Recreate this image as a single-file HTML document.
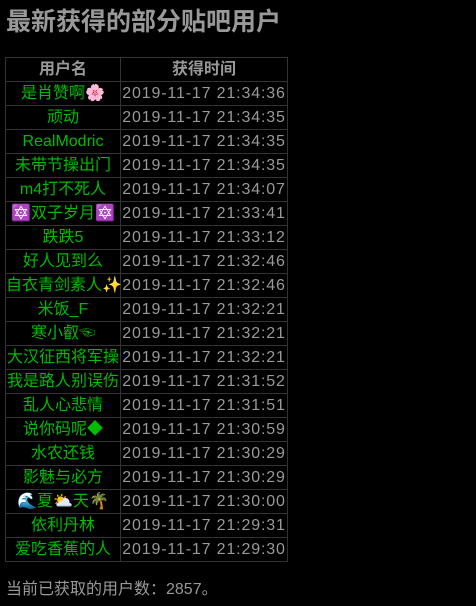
<!DOCTYPE html>
<html><head><meta charset="utf-8"><style>
body{margin:0;background:#000;color:#999;font-family:"Liberation Sans","Noto Sans CJK SC",sans-serif;width:476px;height:606px;overflow:hidden}
h1{position:absolute;left:6px;top:5px;margin:0;font-size:25px;line-height:34px;font-weight:bold;color:#999}
table{position:absolute;left:5px;top:57px;border-collapse:collapse;font-size:16px;table-layout:fixed;width:282px}
td,th{border:1px solid #333;height:23px;padding:0;text-align:center;white-space:nowrap;line-height:23px;overflow:visible}
th{font-weight:bold;color:#999}
col.a{width:115px}col.b{width:167px}
td:first-child{color:#0b0}
td:last-child{color:#999;letter-spacing:0.85px}
p{position:absolute;left:6px;top:579px;margin:0;font-size:16px;line-height:22px}
</style></head><body>
<h1>最新获得的部分贴吧用户</h1>
<table><col class="a"><col class="b">
<tr><th>用户名</th><th>获得时间</th></tr>
<tr><td>是肖赞啊🌸</td><td>2019-11-17 21:34:36</td></tr>
<tr><td>顽动</td><td>2019-11-17 21:34:35</td></tr>
<tr><td>RealModric</td><td>2019-11-17 21:34:35</td></tr>
<tr><td>未带节操出门</td><td>2019-11-17 21:34:35</td></tr>
<tr><td>m4打不死人</td><td>2019-11-17 21:34:07</td></tr>
<tr><td>🔯双子岁月🔯</td><td>2019-11-17 21:33:41</td></tr>
<tr><td>跌跌5</td><td>2019-11-17 21:33:12</td></tr>
<tr><td>好人见到么</td><td>2019-11-17 21:32:46</td></tr>
<tr><td>自衣青剑素人✨</td><td>2019-11-17 21:32:46</td></tr>
<tr><td>米饭_F</td><td>2019-11-17 21:32:21</td></tr>
<tr><td>寒小叡☜</td><td>2019-11-17 21:32:21</td></tr>
<tr><td>大汉征西将军操</td><td>2019-11-17 21:32:21</td></tr>
<tr><td>我是路人别误伤</td><td>2019-11-17 21:31:52</td></tr>
<tr><td>乱人心悲情</td><td>2019-11-17 21:31:51</td></tr>
<tr><td>说你码呢◆</td><td>2019-11-17 21:30:59</td></tr>
<tr><td>水农还钱</td><td>2019-11-17 21:30:29</td></tr>
<tr><td>影魅与必方</td><td>2019-11-17 21:30:29</td></tr>
<tr><td>🌊夏⛅天🌴</td><td>2019-11-17 21:30:00</td></tr>
<tr><td>依利丹林</td><td>2019-11-17 21:29:31</td></tr>
<tr><td>爱吃香蕉的人</td><td>2019-11-17 21:29:30</td></tr>
</table>
<p>当前已获取的用户数：2857。</p>
</body></html>
